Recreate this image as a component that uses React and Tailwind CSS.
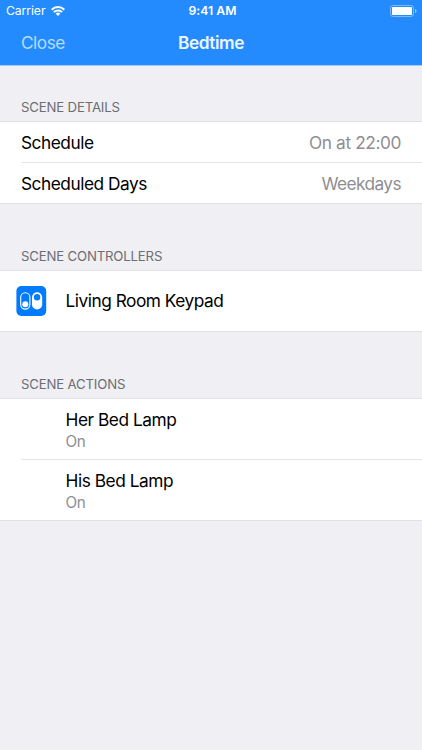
import React from 'react';

const details = [
  { label: 'Schedule', value: 'On at 22:00' },
  { label: 'Scheduled Days', value: 'Weekdays' },
];

const actions = [
  { name: 'Her Bed Lamp', state: 'On' },
  { name: 'His Bed Lamp', state: 'On' },
];

function WifiIcon() {
  return (
    <svg className="w-[14px] h-[10px]" viewBox="0 0 14 10" fill="none" stroke="white" strokeWidth="2">
      <path d="M0.7 3.7a8.9 8.9 0 0 1 12.6 0" />
      <path d="M2.9 6.100a5.8 5.8 0 0 1 8.2 0" />
      <path d="M7 10L4.7 7.8a3.2 3.2 0 0 1 4.6 0z" fill="white" stroke="none" />
    </svg>
  );
}

function BatteryIcon() {
  return (
    <svg className="w-[27px] h-[12px]" viewBox="0 0 27 12">
      <rect x="0.5" y="0.5" width="23" height="11" rx="2.6" fill="none" stroke="white" strokeOpacity="0.4" />
      <rect x="2" y="2" width="20" height="8" rx="0.8" fill="white" />
      <path d="M25 4v4c1-.3 1.5-1.1 1.5-2S26 4.3 25 4z" fill="white" fillOpacity="0.5" />
    </svg>
  );
}

function KeypadIcon() {
  return (
    <svg className="w-[31px] h-[30px]" viewBox="0 0 31 30">
      <rect x="0.4" width="29.8" height="30" rx="5" fill="#007aff" />
      <rect x="4.7" y="6.7" width="9.2" height="16.4" rx="4.6" fill="none" stroke="white" strokeWidth="1.1" />
      <circle cx="9.3" cy="18.3" r="3" fill="white" />
      <rect x="16" y="6.2" width="10.2" height="17.4" rx="5.1" fill="white" />
      <circle cx="21.1" cy="11.3" r="3.2" fill="#007aff" />
    </svg>
  );
}

function StatusBar() {
  return (
    <div className="flex h-[22px] items-center text-[12.2px] text-white">
      <div className="flex flex-1 items-center gap-[6px] pl-[6px]">
        <span className="tracking-[-0.08px]">Carrier</span>
        <WifiIcon />
      </div>
      <span className="pl-[2px] font-semibold tracking-[0.05px]">9:41 AM</span>
      <div className="flex flex-1 justify-end pr-[5px] pb-[1px]">
        <BatteryIcon />
      </div>
    </div>
  );
}

function SectionTitle({ children }) {
  return (
    <h2 className="px-[21px] text-[13.2px] leading-[16px] tracking-[-0.17px] text-[#6d6d72]">{children}</h2>
  );
}

function App() {
  return (
    <div className="h-[750px] w-[422px] overflow-hidden bg-[#efeff4] font-['Inter',sans-serif] text-[17.3px] tracking-[-0.45px] text-black">
      <header className="h-[66px] border-b border-[#a3cbf8] bg-[#248bff]">
        <StatusBar />
        <div className="flex h-[42px] items-center px-[21px]">
          <button className="flex-1 text-left tracking-[-0.5px] text-[#b5dbff]">Close</button>
          <h1 className="font-semibold text-[#eaf5ff]">Bedtime</h1>
          <div className="flex-1" />
        </div>
      </header>

      <section className="pt-[33px]">
        <SectionTitle>SCENE DETAILS</SectionTitle>
        <div className="mt-[6px] border-y border-[#e1e1e5] bg-white pl-[21px]">
          {details.map((row, i) => (
            <div
              key={row.label}
              className={`flex items-center justify-between pt-[1px] pr-[21px] ${i > 0 ? 'h-[41px] border-t border-[#e5e5e8]' : 'h-[40px]'}`}
            >
              <span className="tracking-[-0.48px]">{row.label}</span>
              <span className={`text-[#8e8e93] ${i > 0 ? 'tracking-[-0.58px]' : 'tracking-[-0.4px]'}`}>{row.value}</span>
            </div>
          ))}
        </div>
      </section>

      <section className="pt-[44px]">
        <SectionTitle>SCENE CONTROLLERS</SectionTitle>
        <div className="mt-[6px] flex h-[62px] items-center border-y border-[#e1e1e5] bg-white pl-[16px]">
          <KeypadIcon />
          <span className="ml-[18.5px] tracking-[-0.48px]">Living Room Keypad</span>
        </div>
      </section>

      <section className="pt-[44px]">
        <SectionTitle>SCENE ACTIONS</SectionTitle>
        <div className="mt-[6px] border-y border-[#e1e1e5] bg-white pl-[21px]">
          {actions.map((action, i) => (
            <div
              key={action.name}
              className={`pl-[44.5px] ${i > 0 ? 'h-[61px] border-t border-[#e5e5e8]' : 'h-[60px]'}`}
            >
              <div className="pt-[9px] leading-[23px]">{action.name}</div>
              <div className="text-[15.2px] leading-[21px] tracking-[-0.3px] text-[#8e8e93]">{action.state}</div>
            </div>
          ))}
        </div>
      </section>
    </div>
  );
}

export default App;
